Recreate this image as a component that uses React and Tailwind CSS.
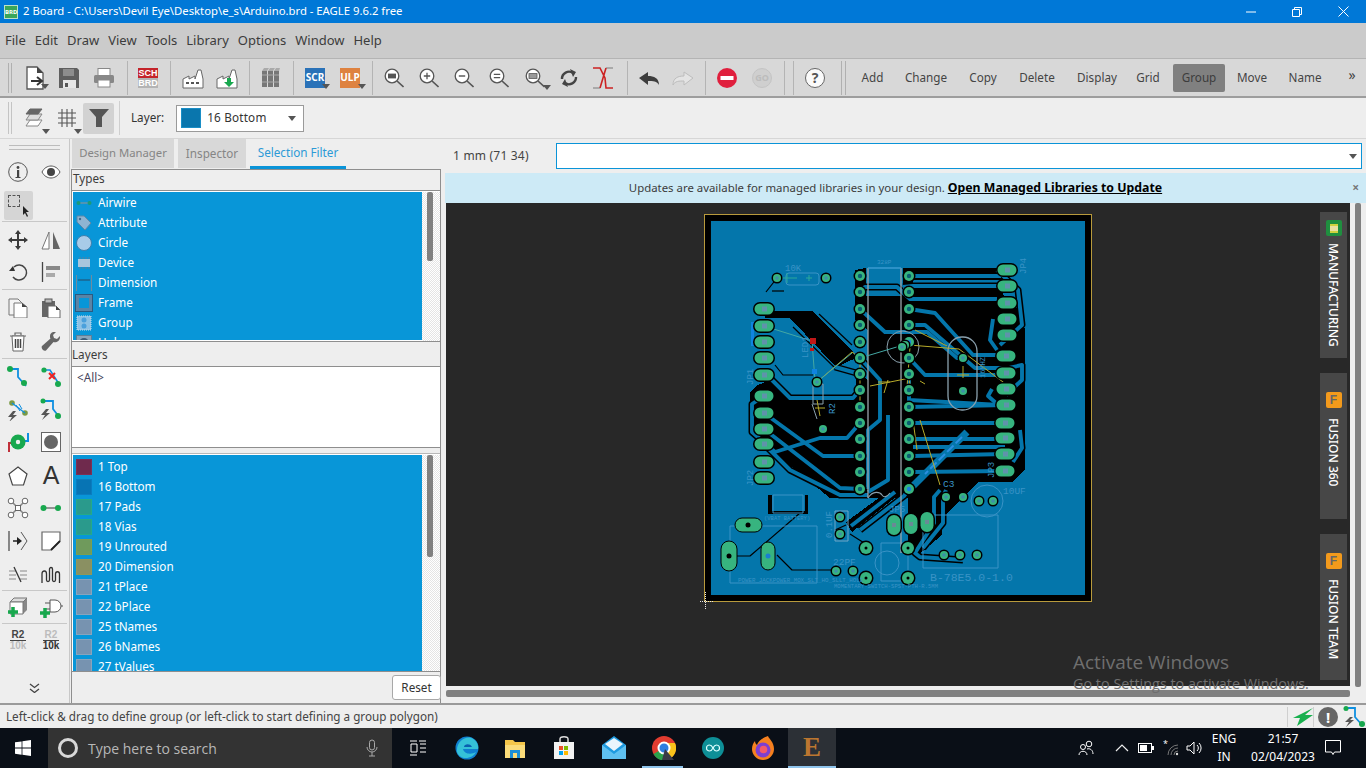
import React from "react";

const Svg = ({ w = 24, h = 24, vb, children, className = "" }) => (
  <svg width={w} height={h} viewBox={vb || `0 0 ${w} ${h}`} fill="none" className={className}>{children}</svg>
);
const Caret = ({ c = "" }) => <span className={`absolute w-0 h-0 border-l-[4px] border-r-[4px] border-t-[5px] border-l-transparent border-r-transparent border-t-[#555] ${c}`} />;
const Cell = ({ className = "", children }) => <div className={`relative h-full flex items-center justify-center shrink-0 ${className}`}>{children}</div>;
const Sep = ({ className = "" }) => <div className={`h-[34px] w-px bg-[#b4b4b4] ${className}`} />;

const Mag = ({ children }) => (
  <Svg w={20} h={20}>
    <circle cx="8" cy="8" r="6.8" stroke="#555" strokeWidth="1.3" fill="#fff" />
    <path d="M13 13l6.500 6" stroke="#555" strokeWidth="1.600" />
    <g transform="translate(8 8) scale(.8) translate(-10 -10)">{children}</g>
  </Svg>
);

const IconNew = () => <Svg><path d="M4 1h10l6 6v16H4z" fill="#fff" stroke="#555" strokeWidth="1.3" /><path d="M14 1v6h6z" fill="#444" /><path d="M8 15h10M14 11l5 4-5 4" stroke="#333" strokeWidth="2" fill="none" /></Svg>;
const IconSave = () => <Svg w={22} h={22}><path d="M1 1h18l2 2v18H1z" fill="#5f5f5f" /><rect x="5" y="2" width="11" height="7" fill="#8d8d8d" /><rect x="5" y="13" width="13" height="8" fill="#e6e6e6" /><rect x="7" y="16" width="3" height="4" fill="#555" /></Svg>;
const IconPrint = () => <Svg w={22} h={22}><rect x="5" y="1.500" width="12" height="7" fill="#fff" stroke="#888" /><rect x="1" y="8" width="20" height="8" rx="1.500" fill="#888" /><rect x="5" y="13" width="12" height="7" fill="#fff" stroke="#888" /></Svg>;
const IconSch = () => (
  <div className="w-[20px] h-[20px] flex flex-col font-['Liberation_Sans',sans-serif] font-bold text-[9px] leading-[10px] text-center">
    <div className="bg-[#c4242a] text-white">SCH</div>
    <div className="bg-[#b4b4b4] text-white">BRD</div>
  </div>
);
const Factory = ({ green }) => (
  <Svg w={22} h={22}>
    <path d="M1 21V12l6-3v3l6-3v3l3-9h3l2 9v9z" fill="#fff" stroke="#666" />
    {green ? <path d="M11 11v4H8l5 5 5-5h-3v-4z" fill="#18a84e" /> : <path d="M4 16h3M9 16h3M14 16h3" stroke="#555" strokeWidth="2" />}
  </Svg>
);
const Books = () => <Svg w={20} h={22}><path d="M1 4h5v16H1zM7 4h5v16H7zM13 4h5v16h-5z" fill="#777" /><path d="M1 4l2-3h5l-2 3zM7 4l2-3h5l-2 3zM13 4l2-3h4l-1 3z" fill="#aaa" /><path d="M1 8h17M1 15h17" stroke="#aaa" /></Svg>;
const Badge = ({ c, t }) => <div className={`w-[20px] h-[20px] ${c} text-white text-[10px] font-bold flex items-center justify-center font-['Noto_Sans',sans-serif]`}>{t}</div>;

const Tools = () => (
  <div className="h-[40px] bg-[#d8d8d8] border-t border-[#b4b4b4] border-b-2 border-b-[#9d9d9d] flex items-center shrink-0 text-[11.7px] text-[#3c3c3c]">
    <div className="ml-[8px] w-[4px] h-[30px] border-l border-r border-[#b0b0b0] shrink-0" />
    <div className="flex items-center h-full ml-[6px]">
      <Cell className="w-[34px]"><IconNew /><Caret c="right-[3px] bottom-[7px]" /></Cell>
      <Cell className="w-[34px]"><IconSave /></Cell>
      <Cell className="w-[36px]"><IconPrint /></Cell>
      <Cell className="w-[10px]"><Sep /></Cell>
      <Cell className="w-[32px]"><IconSch /></Cell>
      <Cell className="w-[12px]"><Sep /></Cell>
      <Cell className="w-[33px]"><Factory /></Cell>
      <Cell className="w-[36px]"><Factory green /></Cell>
      <Cell className="w-[8px]"><Sep /></Cell>
      <Cell className="w-[36px]"><Books /></Cell>
      <Cell className="w-[8px]"><Sep /></Cell>
      <Cell className="w-[36px]"><Badge c="bg-[#2a72b8]" t="SCR" /><Caret c="right-[3px] bottom-[7px]" /></Cell>
      <Cell className="w-[34px]"><Badge c="bg-[#de8240]" t="ULP" /><Caret c="right-[1px] bottom-[7px]" /></Cell>
      <Cell className="w-[10px]"><Sep /></Cell>
      <Cell className="w-[34px]"><Mag><rect x="5" y="7" width="10" height="6" fill="#555" /></Mag></Cell>
      <Cell className="w-[36px]"><Mag><path d="M6 10h8M10 6v8" stroke="#555" strokeWidth="1.6" /></Mag></Cell>
      <Cell className="w-[34px]"><Mag><path d="M6 10h8" stroke="#555" strokeWidth="1.8" /></Mag></Cell>
      <Cell className="w-[36px]"><Mag><path d="M6 8h8M6 12h8" stroke="#555" strokeWidth="1.6" /></Mag></Cell>
      <Cell className="w-[36px]"><Mag><rect x="5" y="7" width="10" height="6" stroke="#555" fill="#999" /></Mag><Caret c="right-[2px] bottom-[6px]" /></Cell>
      <Cell className="w-[32px]"><Svg w={20} h={20}><path d="M3 11a7 7 0 0 1 11-6M17 9a7 7 0 0 1-11 6" stroke="#444" strokeWidth="2.4" /><path d="M11 1l6 3-3 5zM9 19l-6-3 3-5z" fill="#444" /></Svg></Cell>
      <Cell className="w-[36px]"><Svg w={22} h={22}><path d="M1 21h7M14 1h7" stroke="#999" strokeWidth="1.6" /><path d="M1 1h7l5 10 1 10h7M14 1l-3 10-3 10" stroke="#cc2222" strokeWidth="1.6" /></Svg></Cell>
      <Cell className="w-[12px]"><Sep /></Cell>
      <Cell className="w-[32px]"><Svg w={22} h={16}><path d="M1 8l9-6v4c6 0 11 2 11 9-2-4-6-4-11-4v4z" fill="#3d3d3d" /></Svg></Cell>
      <Cell className="w-[36px]"><Svg w={22} h={16}><path d="M21 8l-9-6v4C6 6 1 8 1 15c2-4 6-4 11-4v4z" fill="#e4e4e4" stroke="#bdbdbd" /></Svg></Cell>
      <Cell className="w-[8px]"><Sep /></Cell>
      <Cell className="w-[36px]"><Svg w={20} h={20}><circle cx="10" cy="10" r="10" fill="#e01f3d" /><rect x="3.5" y="8" width="13" height="4" fill="#fff" /></Svg></Cell>
      <Cell className="w-[34px]"><div className="w-[20px] h-[20px] rounded-full bg-[#cfcfcf] border border-[#c4c4c4] text-[#bcbcbc] text-[9px] font-bold flex items-center justify-center">GO</div></Cell>
      <Cell className="w-[10px]"><Sep /></Cell>
      <Cell className="w-[9px]"><Sep /></Cell>
      <Cell className="w-[34px]"><div className="w-[20px] h-[20px] rounded-full border border-[#666] bg-[#fafafa] text-[#555] text-[14px] font-bold flex items-center justify-center">?</div></Cell>
      <div className="w-[5px] h-[34px] border-l border-r border-[#b0b0b0] ml-[9px] shrink-0" />
    </div>
    <div className="flex items-center h-full text-[#444]">
      <Cell className="w-[53px]">Add</Cell>
      <Cell className="w-[54px]">Change</Cell>
      <Cell className="w-[60px]">Copy</Cell>
      <Cell className="w-[48px]">Delete</Cell>
      <Cell className="w-[72px]">Display</Cell>
      <Cell className="w-[30px]">Grid</Cell>
      <div className="ml-[10px] w-[52px] h-[28px] rounded-[2px] bg-[#808080] text-[#3c3c3c] flex items-center justify-center">Group</div>
      <Cell className="w-[54px]">Move</Cell>
      <Cell className="w-[52px]">Name</Cell>
      <Cell className="w-[42px] pb-[6px] text-[14px]">»</Cell>
    </div>
  </div>
);

const Toolbar2 = () => (
  <div className="h-[41px] bg-[#eeeeee] border-b border-[#d6d6d6] flex items-center shrink-0 text-[11.7px] text-[#333]">
    <div className="ml-[8px] w-[4px] h-[32px] border-l border-r border-[#c4c4c4] shrink-0" />
    <Cell className="w-[38px] ml-[2px]">
      <Svg w={24} h={24}><path d="M7 14l4-6h12l-4 6z" fill="#fff" stroke="#888" transform="translate(-2 6)" /><path d="M7 10l4-6h12l-4 6z" fill="#ddd" stroke="#888" transform="translate(-2 4)" /><path d="M7 6l4-5h12l-4 5z" fill="#666" stroke="#666" transform="translate(-2 2)" /></Svg>
      <Caret c="right-[2px] bottom-[4px]" />
    </Cell>
    <Cell className="w-[30px]">
      <Svg w={20} h={20}><path d="M5 1v18M10 1v18M15 1v18M1 5h18M1 10h18M1 15h18" stroke="#555" strokeWidth="1.1" /></Svg>
      <Caret c="right-[0px] bottom-[4px]" />
    </Cell>
    <div className="w-[31px] h-[31px] ml-[1px] bg-[#d2d2d2] rounded-[2px] flex items-center justify-center shrink-0">
      <Svg w={20} h={18}><path d="M0 0h20l-7 8v10H7V8z" fill="#555" /></Svg>
    </div>
    <div className="w-px h-[34px] bg-[#cfcfcf] ml-[5px]" />
    <span className="ml-[11px]">Layer:</span>
    <div className="ml-[12px] w-[128px] h-[27px] bg-white border border-[#9a9a9a] flex items-center pl-[4px] relative">
      <span className="w-[20px] h-[20px] bg-[#0a76ad] border border-[#1a8ec6]" />
      <span className="ml-[6px] tracking-[0.2px]">16 Bottom</span>
      <Caret c="right-[7px] top-[10px]" />
    </div>
  </div>
);

const Tool = ({ children }) => (
  <div className="w-[32px] h-[29px] flex items-center justify-center relative">{children}</div>
);
const Row2 = ({ a, b, className = "" }) => (
  <div className={`flex gap-[1px] pl-[2px] ${className}`}><Tool>{a}</Tool><Tool>{b}</Tool></div>
);
const Hr = ({ className = "" }) => <div className={`mx-[2px] h-px bg-[#c8c8c8] ${className}`} />;
const Gn = "#18a84e";
const Bl = "#0f8fe0";

const LeftTools = () => (
  <div className="w-[70px] shrink-0 bg-[#eeeeee] border-r border-[#c8c8c8] flex flex-col">
    <div className="mt-[6px] mx-[9px] h-[5px] border-t border-b border-[#bdbdbd]" />
    <Row2 className="mt-[7px]"
      a={<Svg w={20} h={20}><circle cx="10" cy="10" r="9.3" stroke="#555" /><rect x="9" y="8" width="2.2" height="7.5" fill="#444" /><circle cx="10" cy="5.5" r="1.4" fill="#444" /><path d="M7.5 15.5h5" stroke="#444" /></Svg>}
      b={<Svg w={20} h={14}><path d="M1 7c4-8 14-8 18 0-4 8-14 8-18 0z" stroke="#555" fill="#fff" /><circle cx="10" cy="7" r="4" fill="#444" /></Svg>} />
    <div className="ml-[4px] mt-[5px] w-[29px] h-[29px] bg-[#d5d5d5] rounded-[2px] flex items-start justify-start p-[4px] relative">
      <div className="w-[12px] h-[12px] border border-dashed border-[#555]" />
      <Svg w={8} h={12} className="absolute right-[3px] bottom-[3px]"><path d="M1 1v9l2-2 2 4 1-1-2-4h3z" fill="#222" /></Svg>
    </div>
    <Hr className="mt-[1px]" />
    <Row2 className="mt-[3px]"
      a={<Svg w={20} h={20}><path d="M10 0l3 4h-2v5h5V7l4 3-4 3v-2h-5v5h2l-3 4-3-4h2v-5H4v2l-4-3 4-3v2h5V4H7z" fill="#3a3a3a" /></Svg>}
      b={<Svg w={20} h={20}><path d="M8 2v17H1z" fill="#fff" stroke="#777" /><path d="M12 2v17h7z" fill="#666" /></Svg>} />
    <Row2 className="mt-[3px]"
      a={<Svg w={20} h={20}><path d="M5 5a7.500 7.500 0 1 1-1 10" stroke="#444" strokeWidth="1.500" transform="translate(1 0)" /><path d="M1 9l6 0-2-5z" fill="#333" /></Svg>}
      b={<Svg w={20} h={20}><path d="M1.500 0v20" stroke="#444" strokeWidth="1.300" /><rect x="5" y="4" width="14" height="4" fill="#888" /><rect x="5" y="11" width="9" height="4" fill="#aaa" /></Svg>} />
    <Hr className="mt-[3px]" />
    <Row2 className="mt-[3px]"
      a={<Svg w={20} h={20}><path d="M1 1h9l4 4v12H1z" fill="#f5f5f5" stroke="#777" /><path d="M6 5h8l5 4v11H6z" fill="#fff" stroke="#777" /><path d="M14 5v4h5z" fill="#444" /></Svg>}
      b={<Svg w={20} h={20}><rect x="1" y="3" width="13" height="16" fill="#666" /><rect x="4" y="1" width="7" height="4" fill="#bbb" stroke="#555" /><path d="M7 8h8l4 4v8H7z" fill="#fff" stroke="#666" /><path d="M15 8v4h4z" fill="#444" /></Svg>} />
    <Row2 className="mt-[5px]"
      a={<Svg w={18} h={20}><path d="M1 4h16M6 3V1h6v2" stroke="#666" strokeWidth="1.200" /><path d="M3 4l1 15h10l1-15z" fill="#fff" stroke="#666" /><path d="M6.500 7v9M9 7v9M11.500 7v9" stroke="#444" strokeWidth="1.500" /></Svg>}
      b={<Svg w={20} h={20}><path d="M19 4l-3 3-3-1-1-3 3-3c-3-.8-6 1-6 4 0 1 0 2 .5 2.500L1 14c-1.500 2 2 6 4 4.500L12.500 10c2 .8 7 0 6.500-6z" fill="#666" /></Svg>} />
    <Hr className="mt-[2px]" />
    <Row2 className="mt-[3px]"
      a={<Svg w={24} h={24}><path d="M4 4h8v8l8 9" stroke={Bl} strokeWidth="1.800" /><circle cx="4" cy="4" r="3" fill={Gn} /><circle cx="18" cy="18" r="3" fill={Gn} /></Svg>}
      b={<Svg w={22} h={22}><path d="M4 4h6l9 14" stroke={Bl} strokeWidth="1.600" /><circle cx="4" cy="4" r="2.600" fill={Gn} /><circle cx="18" cy="18" r="3" fill={Gn} /><path d="M9 7l6 6M15 7l-6 6" stroke="#e22" strokeWidth="2" /></Svg>} />
    <Row2 className="mt-[4px]"
      a={<Svg w={24} h={22}><circle cx="6" cy="4" r="2.800" fill="#7a9a45" /><circle cx="19" cy="14" r="2.800" fill="#7a9a45" /><path d="M6 4l13 10" stroke={Bl} strokeWidth="1.300" /><path d="M10 6l4 6M13 5l3 5" stroke={Bl} /><path d="M7 12L2 18h4l-3 5 8-7H7l3-4z" fill="#555" /></Svg>}
      b={<Svg w={24} h={24}><path d="M4 3h10v8l7 9" stroke={Bl} strokeWidth="1.800" /><circle cx="4" cy="3" r="2.500" fill={Gn} /><circle cx="19" cy="18" r="3" fill={Gn} /><path d="M7 11L2 17h4l-3 5 8-7H7l3-4z" fill="#555" /></Svg>} />
    <Row2 className="mt-[3px]"
      a={<Svg w={22} h={22}><path d="M2 21v-9h5" stroke="#c0303a" strokeWidth="2" /><path d="M16 10h5V2" stroke={Bl} strokeWidth="2" /><circle cx="11" cy="11" r="7.500" fill={Gn} /><circle cx="11" cy="11" r="2.200" fill="#eee" /></Svg>}
      b={<Svg w={20} h={20}><rect x="0.500" y="0.500" width="19" height="19" fill="#fff" stroke="#666" /><circle cx="10" cy="10" r="7" fill="#666" /></Svg>} />
    <Row2 className="mt-[5px]"
      a={<Svg w={20} h={20}><path d="M10 1l9 7-3.500 11h-11L1 8z" fill="#fff" stroke="#444" strokeWidth="1.200" /></Svg>}
      b={<span className="font-['Liberation_Sans',sans-serif] text-[25px] leading-none text-[#333]">A</span>} />
    <Row2 className="mt-[3px]"
      a={<Svg w={22} h={22}><path d="M4 4l14 14M18 4L4 18" stroke="#888" strokeWidth="1.500" />{[[4, 4], [18, 4], [4, 18], [18, 18]].map(([x, y]) => <circle key={x + "" + y} cx={x} cy={y} r="2.800" fill="#fff" stroke="#666" />)}<rect x="8.500" y="8.500" width="5" height="5" fill="#fff" stroke="#666" /></Svg>}
      b={<Svg w={22} h={10}><path d="M4 5h14" stroke="#888" strokeWidth="1.800" /><circle cx="3.500" cy="5" r="3" fill={Gn} /><circle cx="18" cy="5" r="3" fill={Gn} /></Svg>} />
    <Row2 className="mt-[4px]"
      a={<Svg w={20} h={20}><path d="M1 0v20" stroke="#444" strokeWidth="1.200" /><path d="M5 10h6" stroke="#222" strokeWidth="1.500" /><path d="M9 6l5 4-5 4z" fill="#222" /><path d="M13 1l6 9-6 9" stroke="#555" /></Svg>}
      b={<Svg w={20} h={20}><path d="M1 1h18v9l-9 9H1z" fill="#fff" stroke="#666" strokeWidth="1.200" /><path d="M10 19l9-9" stroke="#222" strokeWidth="1.800" /></Svg>} />
    <Row2 className="mt-[5px]"
      a={<Svg w={20} h={20}><path d="M1 6h7M1 10h7M1 14h7M12 6h7M12 10h7M12 14h7" stroke="#aaa" strokeWidth="1.500" /><path d="M6 2l7 15" stroke="#333" strokeWidth="1.300" /></Svg>}
      b={<Svg w={20} h={18}><path d="M1 17V8c0-3 2-3 2.500-3s2 0 2 3v6c0 2 3 2 3 0V3c0-2 3-2 3 0v11c0 2 3 2 3 0V8c0-3 4-3 4 0v9" stroke="#333" strokeWidth="1.300" /></Svg>} />
    <Hr className="mt-[1px]" />
    <Row2 className="mt-[2px]"
      a={<Svg w={22} h={22}><path d="M3 5l4-4h13v12l-4 4H3z" fill="#888" /><path d="M7 1h13l-4 4H3z" fill="#ddd" stroke="#777" /><path d="M3 5h13v12H3z" fill="#fff" stroke="#777" /><path d="M4 10v10M-1 15h10" stroke={Gn} strokeWidth="3.500" transform="translate(2 0)" /></Svg>}
      b={<Svg w={24} h={22}><path d="M11 3h5a6 6 0 0 1 0 12h-5z" fill="#fff" stroke="#555" /><path d="M22 9h2M6 6h5M6 12h5" stroke="#555" /><path d="M6 11v10M1 16h10" stroke={Gn} strokeWidth="3.500" /></Svg>}
    />
    <Hr className="mt-[1px]" />
    <Row2 className="mt-[2px]"
      a={<div className="font-['Liberation_Sans',sans-serif] font-bold text-[10px] leading-[10px] text-center"><div className="text-[#444] border-b border-[#444]">R2</div><div className="text-[#bcbcbc]">10k</div></div>}
      b={<div className="relative font-['Liberation_Sans',sans-serif] font-bold text-[10px] leading-[10px] text-center"><div className="text-[#bcbcbc] border-b border-[#444]">R2</div><div className="text-[#333]">10k</div></div>} />
    <div className="mt-[28px] pl-[29px]"><Svg w={11} h={10}><path d="M1 1l4.500 3.500L10 1M1 6l4.500 3.500L10 6" stroke="#444" strokeWidth="1.300" /></Svg></div>
  </div>
);

const TypeIcon = ({ i }) => {
  const ic = [
    <Svg w={16} h={16}><path d="M3 8h10" stroke="#6a93a8" strokeWidth="1.500" /><circle cx="2.500" cy="8" r="2" fill="#1a9a78" /><circle cx="13.500" cy="8" r="2" fill="#1a9a78" /></Svg>,
    <Svg w={16} h={16}><path d="M1 1h7l7 7-6 7-8-8z" fill="#8fb4d2" stroke="#5d88a8" /><circle cx="4" cy="4" r="1.200" fill="#3d6a90" /></Svg>,
    <Svg w={16} h={16}><circle cx="8" cy="8" r="7.500" fill="#a8cbe8" stroke="#3b7fae" /></Svg>,
    <Svg w={16} h={16}><rect x="2" y="4" width="12" height="8" fill="#a8c6dd" /><path d="M4 2v12M7 2v12M10 2v12M13 2v12" stroke="#5d7f98" strokeDasharray="2 8" /></Svg>,
    <Svg w={16} h={16}><path d="M.5 0v16M15.500 0v16" stroke="#6d8ba0" /><path d="M2 5h12" stroke="#264a68" /></Svg>,
    <div className="w-[16px] h-[16px] bg-[#0896d8] border-[3px] border-[#5a84a6] outline outline-1 outline-[#2a5a80]" />,
    <Svg w={16} h={16}><rect x="1" y="1" width="14" height="14" fill="#8cc2e6" stroke="#c8dbe8" strokeDasharray="1 1" /><circle cx="8" cy="5" r="2.500" fill="#4aa0dc" /><circle cx="8" cy="11" r="2.500" fill="#4aa0dc" /></Svg>,
    <Svg w={16} h={16}><rect x="0.500" y="0.500" width="15" height="15" fill="#8aa5ba" stroke="#5d7f98" /><circle cx="8" cy="8" r="5" fill="#3c5d78" /></Svg>,
  ];
  return <span className="w-[16px] h-[16px] flex items-center justify-center shrink-0">{ic[i]}</span>;
};

const Scroll = ({ thumb }) => (
  <div className="w-[18px] shrink-0 bg-[repeating-conic-gradient(#e4e4e4_0_25%,#ffffff_0_50%)] bg-[length:2px_2px] pl-[5px]">
    <div className={`w-[6px] rounded-[2px] bg-[#808080] ${thumb}`} />
  </div>
);

const TYPES = ["Airwire", "Attribute", "Circle", "Device", "Dimension", "Frame", "Group", "Hole"];
const LAYERS = [
  ["1 Top", "bg-[#6f2a4d] border-[#7e2f55]"],
  ["16 Bottom", "bg-[#0774b4] border-[#0a7cc0]"],
  ["17 Pads", "bg-[#2a9a8c] border-[#24aa88]"],
  ["18 Vias", "bg-[#2a9a8c] border-[#24aa88]"],
  ["19 Unrouted", "bg-[#6f9a5c] border-[#7a9f50]"],
  ["20 Dimension", "bg-[#8a9062] border-[#8f9858]"],
  ["21 tPlace", "bg-[#7793b0] border-[#88a4bc]"],
  ["22 bPlace", "bg-[#7793b0] border-[#88a4bc]"],
  ["25 tNames", "bg-[#7793b0] border-[#88a4bc]"],
  ["26 bNames", "bg-[#7793b0] border-[#88a4bc]"],
  ["27 tValues", "bg-[#7793b0] border-[#88a4bc]"],
];

const Panel = () => (
  <div className="w-[373px] shrink-0 bg-[#eeeeee] flex flex-col text-[11.7px]">
    <div className="h-[30px] flex items-start pl-[2px] gap-[4px] text-[#858585] shrink-0">
      <div className="w-[102px] h-[29px] bg-[#d8d8d8] flex items-center justify-center text-[11.3px]">Design Manager</div>
      <div className="w-[68px] h-[29px] bg-[#d8d8d8] flex items-center justify-center">Inspector</div>
      <div className="w-[96px] h-[30px] flex items-center justify-center text-[#2c9ad6] border-b-[3px] border-[#0a94d8]">Selection Filter</div>
    </div>
    <div className="ml-[1px] mr-[2px] flex-1 flex flex-col border border-[#8e8e8e] border-b-0">
      <div className="h-[21px] border-b border-[#8e8e8e] pl-[1px] text-[#3c3c3c] leading-[16px] shrink-0">Types</div>
      <div className="h-[151px] bg-white border-b border-[#8e8e8e] flex pl-[1px] pt-[1px] shrink-0 overflow-hidden">
        <div className="w-[350px] h-[148px] bg-[#0896d8] overflow-hidden text-white pt-[1px]">
          {TYPES.map((t, i) => (
            <div key={t} className="h-[20px] flex items-center pl-[3px]"><TypeIcon i={i} /><span className="ml-[6px]">{t}</span></div>
          ))}
        </div>
        <Scroll thumb="h-[69px]" />
      </div>
      <div className="h-[25px] border-b border-[#8e8e8e] text-[#3c3c3c] leading-[24px] shrink-0">Layers</div>
      <div className="h-[81px] bg-white border-b border-[#8e8e8e] pl-[5px] pt-[2px] text-[#44445c] shrink-0">&lt;All&gt;</div>
      <div className="h-[6px] border-b border-[#b8b8b8] shrink-0" />
      <div className="h-[218px] bg-white border-b border-[#8e8e8e] flex pl-[1px] pt-[1px] shrink-0 overflow-hidden">
        <div className="w-[350px] h-[216px] bg-[#0896d8] overflow-hidden text-white pt-[2px]">
          {LAYERS.map(([t, c]) => (
            <div key={t} className="h-[20px] flex items-center pl-[3px]">
              <span className={`w-[16px] h-[16px] border shrink-0 ${c}`} /><span className="ml-[6px]">{t}</span>
            </div>
          ))}
        </div>
        <Scroll thumb="h-[102px]" />
      </div>
      <div className="flex-1 flex justify-end items-start pt-[3px]">
        <div className="w-[49px] h-[25px] -mr-[1px] bg-white border border-[#a8a8a8] rounded-[3px] flex items-center justify-center text-[#333]">Reset</div>
      </div>
    </div>
  </div>
);

const ICY = [276, 292, 309, 325, 342, 358, 374, 390, 407, 423, 439, 456, 472, 489];
const HDR = [[764, 309], [764, 326], [764, 342], [764, 358], [764, 375], [764, 396], [764, 413], [764, 429], [764, 444], [764, 462], [764, 478],
  [1007, 270], [1007, 286], [1007, 303], [1007, 319], [1007, 335], [1006, 356], [1006, 373], [1006, 389], [1006, 405], [1005, 423], [1005, 438], [1005, 454], [1005, 471]];
const BLACK = [
  "765,311 812,311 852,350 856,358 836,367 790,318 765,318",
  "750,392 758,385 770,380 790,397 856,397 856,372 868,380 868,498 830,498 775,453 750,433",
  "855,270 866,268 1003,268 1003,295 1020,312 1025,330 1025,470 1012,482 978,482 942,518 942,535 917,556 908,552 908,498 868,498 868,330 855,320",
  "846,522 895,486 902,492 852,532",
  "768,495 772,495 772,511 805,511 805,495 808,495 808,514 768,514",
];
const BLUEAREA = [
  "866,268 903,268 903,296 890,296 866,296",
  "913,280 1000,280 1000,283 913,283",
  "1003,268 1025,268 1025,298 1003,295",
];
const TR = [
  "909,276 1001,276",
  "860,292 865,287 897,287 910,299 997,299",
  "903,287 913,286 1000,286",
  "860,309 885,332 927,332 957,358 963,358",
  "909,309 935,313 973,355 1000,355",
  "909,325 925,325 975,368 1006,368",
  "860,358 880,380 880,420 868,430 868,489",
  "860,374 835,367",
  "860,390 853,398 790,398 765,373",
  "909,358 925,375 1000,375",
  "909,376 909,400 1000,405",
  "909,407 1006,405",
  "913,423 1005,423",
  "913,439 1005,439",
  "913,447 1005,447",
  "913,456 1005,454",
  "913,472 1005,471",
  "764,396 752,404 752,432 775,452 820,438 847,438 860,423",
  "764,413 823,456 860,456",
  "764,429 840,488 860,489",
  "764,444 790,470 840,495 868,495",
  "997,270 1018,290 1022,325 1000,345",
  "993,319 990,340 997,350",
  "1000,370 1022,365 1022,380 1006,395",
  "992,389 988,396 996,403",
  "1020,430 1022,448 1013,462",
  "851,526 895,492",
  "860,530 904,496 909,489",
  "888,415 888,480 868,492",
  "940,490 934,497 934,523 915,553 920,557 963,560",
  "946,490 943,497 943,523 923,548",
];
const BIG = ["967,432 913,486"];

const Board = () => (
  <svg width="400" height="400" viewBox="700 210 400 400" className="shrink-0 block" shapeRendering="crispEdges">
    <rect x="704.500" y="214.500" width="387" height="387" fill="#000" stroke="#b89a3c" />
    <rect x="711" y="221" width="374" height="374" fill="#0476ab" />
    <g fill="#000">{BLACK.map((p) => <polygon key={p} points={p} />)}</g>
    <g fill="#0476ab">{BLUEAREA.map((p) => <polygon key={p} points={p} />)}</g>
    <g shapeRendering="geometricPrecision" strokeLinejoin="round" fill="none">
      <g stroke="#000" strokeWidth="7">{TR.map((p) => <polyline key={p} points={p} />)}</g>
      <g stroke="#0476ab" strokeWidth="3.900">{TR.map((p) => <polyline key={p} points={p} />)}</g>
      <polyline points={BIG[0]} stroke="#0476ab" strokeWidth="7" />
      <polyline points="962,437 925,474" stroke="#2a8ee0" strokeWidth="2" strokeDasharray="9 3" />
      <g stroke="#000" strokeWidth="1.200">
        <polyline points="819,314 852,345" /><polyline points="793,327 835,368" />
        <polyline points="772,291 784,291" /><polyline points="777,278 766,292" />
        <polyline points="775,365 783,375 813,375" />
        <polyline points="737,556 750,556 800,513" /><polyline points="777,555 792,570 833,570" />
        <polyline points="846,525 835,530" /><polyline points="850,534 872,548" />
      </g>
      <g stroke="#3a93c6" strokeWidth="1">
        <rect x="786" y="273" width="33" height="12" rx="3" />
        <rect x="773" y="495" width="30" height="18" />
        <rect x="730" y="526" width="87" height="57" />
        <rect x="881" y="543" width="27" height="38" />
        <circle cx="887" cy="563" r="12" />
        <rect x="923" y="515" width="75" height="53" />
        <circle cx="987" cy="501" r="16" />
        <rect x="835" y="511" width="13" height="30" stroke="#6ea6c8" />
        <path d="M781 278h16M787 273v10M806 278h6M809 275v6" stroke="#2aa89a" />
      </g>
      <g stroke="#8aa0ad" strokeWidth="1.300">
        <path d="M868 268v230M901 268v285" stroke="#9aa5ab" />
        <path d="M868 268h33" stroke="#3a9bd0" strokeWidth="1.500" />
        <rect x="948" y="337" width="29" height="73" rx="14" />
        <circle cx="903" cy="347" r="16" strokeWidth="1" />
        <path d="M818 384h-5v20h10v-20z M812 404l5 15" strokeWidth="1" />
        <path d="M868 498c5-8 12-6 14-3s5 2 8-2" strokeWidth="1.100" />
      </g>
      <g stroke="#b8ab2a" strokeWidth="1">
        <path d="M817 382l35-30 8 6M860 358v50M870 386l40-8M909 345l50 4 48 36M915 330l32 16M925 384l-5-3M913 420l4 30M920 420l20 65M910 347l-3 40M909 373l1 14" />
        <path d="M888 380l-4 13M878 382h12M963 366v12M957 375h12M817 400l3 16M815 408h10" />
      </g>
      <g stroke="#44a8a4" strokeWidth="1">
        <path d="M764 326l48 15 3 40 2 1M817 382l35-29M860 358l40-12 8-1" />
      </g>
    </g>
    <rect x="810" y="338" width="6" height="6" fill="#c01818" />
    <rect x="810" y="348" width="4" height="3" fill="#c01818" />
    <rect x="812" y="369" width="5" height="5" fill="#1084e0" />
    <rect x="764" y="354" width="5" height="6" fill="#1084e0" />
    <rect x="751" y="322" width="3" height="24" fill="#1084e0" />
    <g shapeRendering="geometricPrecision">
      {[860, 909].flatMap((x) => ICY.map((y) => (
        <g key={x + "_" + y}>
          <circle cx={x} cy={y} r="6.500" fill="#000" />
          <circle cx={x} cy={y} r="5" fill="#37b47f" />
          <circle cx={x} cy={y} r="2.200" fill={x === 909 && (y === 342 || y === 489) ? "#1b7ee0" : "#0a5e72"} />
        </g>
      )))}
      {[[777, 278], [826, 278], [817, 382], [823, 429], [963, 358], [963, 391], [840, 517], [840, 534], [836, 571], [853, 571], [946, 497], [963, 497], [979, 501], [993, 501], [944, 555], [960, 555], [977, 555], [905, 345], [902, 347]].map(([x, y]) => (
        <g key={x + "p" + y}>
          <circle cx={x} cy={y} r="5.500" fill="#000" />
          <circle cx={x} cy={y} r="4" fill="#37b47f" />
          <circle cx={x} cy={y} r="1.800" fill="#3d8fa8" />
        </g>
      ))}
      {[[866, 548], [866, 578], [908, 548], [908, 578]].map(([x, y]) => (
        <g key={x + "s" + y}>
          <circle cx={x} cy={y} r="7.500" fill="#000" />
          <circle cx={x} cy={y} r="6" fill="#37b47f" />
          <circle cx={x} cy={y} r="1.500" fill="#000" />
        </g>
      ))}
      {HDR.map(([x, y]) => (
        <g key={x + "h" + y}>
          <rect x={x - 11} y={y - 7} width="22" height="14" rx="7" fill="#000" />
          <rect x={x - 9.500} y={y - 5.500} width="19" height="11" rx="5.500" fill="#37b47f" />
          <rect x={x - 2} y={y - 2.500} width="5" height="5" fill="#5f93ab" />
        </g>
      ))}
      {[[894, 525], [911, 524], [927, 522]].map(([x, y]) => (
        <g key={x + "j" + y}>
          <rect x={x - 8} y={y - 11.500} width="16" height="23" rx="8" fill="#000" />
          <rect x={x - 6.500} y={y - 10} width="13" height="20" rx="6.500" fill="#37b47f" />
          <rect x={x - 2} y={y - 2} width="4" height="4" fill="#6a8a96" />
        </g>
      ))}
      <rect x="735" y="518" width="27" height="14" rx="7" fill="#37b47f" stroke="#000" />
      <circle cx="748" cy="525" r="2.500" fill="#000" />
      <rect x="721" y="541" width="16" height="30" rx="8" fill="#37b47f" stroke="#000" />
      <circle cx="729" cy="556" r="2.500" fill="#000" />
      <rect x="761" y="542" width="14" height="28" rx="7" fill="#37b47f" stroke="#000" />
      <circle cx="768" cy="556" r="2.500" fill="#1a7ed0" />
    </g>
    <g fontFamily="'Liberation Mono',monospace" fill="#3a93c6" shapeRendering="geometricPrecision">
      <text x="785" y="271" fontSize="9">10K</text>
      <text x="877" y="264" fontSize="6">328P</text>
      <text transform="translate(1026 274) rotate(-90)" fontSize="9">JP4</text>
      <text transform="translate(753 385) rotate(-90)" fontSize="9">JP1</text>
      <text transform="translate(753 486) rotate(-90)" fontSize="9">JP2</text>
      <text transform="translate(994 478) rotate(-90)" fontSize="9">JP3</text>
      <text transform="translate(808 358) rotate(-90)" fontSize="9">LED1</text>
      <text transform="translate(835 414) rotate(-90)" fontSize="9">R2</text>
      <text transform="translate(985 378) rotate(-90)" fontSize="7">16MHZ</text>
      <text transform="translate(832 538) rotate(-90)" fontSize="9">0.1UF</text>
      <text x="833" y="565" fontSize="9.500">22PF</text>
      <text x="1003" y="494" fontSize="9.500">10UF</text>
      <text x="943" y="487" fontSize="9.500">C3</text>
      <text x="889" y="512" fontSize="9">JP5</text>
      <text x="930" y="581" fontSize="11.500">B-78E5.0-1.0</text>
      <text x="738" y="582" fontSize="5.800">POWER_JACKPOWER_MOX_SLT_HO_SLLT_HOLE</text>
      <text x="834" y="588" fontSize="5.600">MOMENTARY-SWITCH-SPST-PTH-R.5MM</text>
      <text x="764" y="520" fontSize="5.500">(VBAT BATTERY)</text>
    </g>
    <path d="M705 592v18M696 601h18" stroke="#e8e8e8" strokeDasharray="1 1" />
  </svg>
);

const SideTab = ({ icon, label, className = "", h = "h-[146px]" }) => (
  <div className={`w-[27px] ${h} bg-[#474747] flex flex-col items-center ${className}`}>
    {icon}
    <span className="[writing-mode:vertical-rl] text-white text-[12px] font-medium leading-[27px]">{label}</span>
  </div>
);
const FIcon = () => <div className="w-[16px] h-[16px] mb-[10px] bg-[#f39a1c] rounded-[2px] text-[#666] font-bold text-[12px] leading-[16px] text-center font-['Liberation_Sans',sans-serif]">F</div>;
const ChipIcon = () => <div className="w-[16px] h-[16px] mb-[7px] bg-[#1f8f3f] rounded-[2px] flex items-center justify-center"><div className="w-[8px] h-[9px] bg-[#e8e0a0] border-t-2 border-b-2 border-[#cfd23e]" /></div>;

const Right = () => (
  <div className="flex-1 ml-[2px] flex flex-col min-w-0">
    <div className="h-[34px] bg-[#eeeeee] flex items-center shrink-0 text-[12px] text-[#444] relative">
      <span className="ml-[8px] w-[103px] tracking-[0.2px]">1 mm (71 34)</span>
      <div className="w-[806px] h-[26px] bg-white border border-[#0a94d8] relative">
        <Caret c="right-[4px] top-[10px]" />
      </div>
    </div>
    <div className="h-[30px] bg-[#cdeaf6] flex items-center justify-center shrink-0 text-[#3c3c3c] relative pr-[20px]">
      <span className="text-[11.4px]">Updates are available for managed libraries in your design.&nbsp;</span>
      <span className="font-bold text-black underline text-[12.3px]">Open Managed Libraries to Update</span>
      <span className="absolute right-[7px] top-[6px] text-[#777] text-[12px] font-bold">×</span>
    </div>
    <div className="flex-1 flex min-h-0 bg-[#eeeeee] pl-px">
      <div className="w-[904px] flex flex-col">
        <div className="h-[483px] bg-[#282828] flex relative overflow-visible">
          <div className="ml-[254px] mt-[7px]"><Board /></div>
          <div className="ml-auto mr-[3px] mt-[9px] flex flex-col gap-[15px]">
            <SideTab className="pt-[8px]" h="h-[146px]" icon={<ChipIcon />} label="MANUFACTURING" />
            <SideTab className="pt-[19px]" icon={<FIcon />} label="FUSION 360" />
            <SideTab className="pt-[19px]" icon={<FIcon />} label="FUSION TEAM" />
          </div>
          <div className="absolute left-[627px] top-[448px] z-10 font-['Open_Sans',sans-serif] text-[#6f6f6f]">
            <div className="text-[19px] leading-[22px]">Activate Windows</div>
            <div className="text-[14.4px] leading-[22px] whitespace-nowrap">Go to Settings to activate Windows.</div>
          </div>
        </div>
        <div className="pt-[4px]"><div className="h-[7px] w-full rounded-[2px] bg-[#808080]" /></div>
      </div>
      <div className="pl-[5px]"><div className="w-[6px] h-[484px] bg-[#808080] rounded-[2px]" /></div>
    </div>
  </div>
);

const Status = () => (
  <div className="h-[25px] bg-[#eeeeee] border-t-2 border-[#9a9a9a] flex items-center shrink-0 text-[11.7px] text-[#444] pl-[6px] relative">
    <span>Left-click &amp; drag to define group (or left-click to start defining a group polygon)</span>
    <div className="ml-auto flex items-center h-full">
      <div className="w-px h-[20px] bg-[#cfcfcf]" />
      <div className="w-[25px] flex justify-center pl-[4px]"><Svg w={20} h={20}><path d="M20 1L8 7 0 11h7l-3 8 16-11h-8z" fill="#18b04e" /></Svg></div>
      <div className="w-px h-[20px] bg-[#cfcfcf]" />
      <div className="w-[28px] flex justify-center"><div className="w-[20px] h-[20px] rounded-full bg-[#666] text-white font-bold text-[15px] leading-[20px] text-center">!</div></div>
      <div className="w-[24px] flex justify-center"><Svg w={22} h={22}><path d="M3 2h9v9l7 8" stroke={Bl} strokeWidth="1.800" /><circle cx="3" cy="2.500" r="2.500" fill={Gn} /><circle cx="19" cy="18" r="3" fill={Gn} /><path d="M7 11L2 16h4l-3 5 8-7H7l3-3z" fill="#555" /></Svg></div>
    </div>
  </div>
);

const TB = ({ children, className = "" }) => <div className={`h-full flex items-center justify-center shrink-0 ${className}`}>{children}</div>;

const Taskbar = () => (
  <div className="h-[40px] bg-[#0a0f17] flex items-center shrink-0 text-white relative font-['Open_Sans',sans-serif]">
    <TB className="w-[48px] pr-[2px]">
      <Svg w={16} h={16}><path d="M0 2.300l6.600-.9v6.200H0zM7.400 1.300L16 0v7.600H7.400zM0 8.400h6.600v6.300L0 13.800zM7.400 8.400H16V16l-8.600-1.200z" fill="#fff" /></Svg>
    </TB>
    <div className="w-[344px] h-full bg-[#333333] flex items-center pl-[10px] shrink-0">
      <span className="w-[20px] h-[20px] rounded-full border-[3px] border-[#d8d8d8]" />
      <span className="ml-[10px] text-[14px] text-[#b8b8b8]">Type here to search</span>
      <Svg w={12} h={18} className="ml-auto mr-[14px]"><rect x="3.500" y="1" width="5" height="10" rx="2.500" stroke="#aaa" /><path d="M1 8a5 5 0 0 0 10 0M6 13v4M3 17h6" stroke="#aaa" /></Svg>
    </div>
    <TB className="w-[51px]"><Svg w={16} h={16}><path d="M0 1h7M9 1h7M1 4h6v8H1zM0 15h7" stroke="#fff" /><path d="M10 4h6M10 8h6M10 12h6" stroke="#fff" /></Svg></TB>
    <TB className="w-[47px]">
      <Svg w={24} h={24}><circle cx="12" cy="12" r="11.500" fill="#0f7fd0" /><path d="M2 16C1 6 10 0 16 2c5 1.500 8 7 7 11H8c1 5 8 6 13 3-3 7-16 9-19 0z" fill="#35c1d8" /><path d="M9 11c0-3 6-4 8 0z" fill="#0a5fb0" /></Svg>
    </TB>
    <TB className="w-[50px] relative">
      <Svg w={22} h={22}><path d="M1 3h8l2 2h10v16H1z" fill="#f5c64a" /><path d="M1 8h20v13H1z" fill="#fbdc7a" /><rect x="6" y="13" width="10" height="8" fill="#1d8fd8" /><rect x="9" y="16" width="4" height="5" fill="#fbdc7a" /></Svg>
    </TB>
    <TB className="w-[48px]">
      <Svg w={22} h={24}><path d="M7 6V3c0-3 8-3 8 0v3" stroke="#ddd" strokeWidth="1.500" /><rect x="1" y="6" width="20" height="17" fill="#f2f2f2" /><rect x="6" y="10" width="4" height="4" fill="#e8502a" /><rect x="11" y="10" width="4" height="4" fill="#7fba00" /><rect x="6" y="15" width="4" height="4" fill="#00a4ef" /><rect x="11" y="15" width="4" height="4" fill="#ffb900" /></Svg>
    </TB>
    <TB className="w-[51px]">
      <Svg w={24} h={24}><path d="M0 9l12-9 12 9v14H0z" fill="#1e9ae0" /><path d="M0 9l12 9 12-9v14H0z" fill="#5fc0f0" /><path d="M3 8l9-6 9 6-9 7z" fill="#e8f4fc" /></Svg>
    </TB>
    <TB className="w-[49px]">
      <Svg w={24} h={24}><circle cx="12" cy="12" r="12" fill="#e23c30" /><path d="M12 12L1.500 18A12 12 0 0 0 14 24z" fill="#2ba24c" /><path d="M12 7h11a12 12 0 0 1-9 17z" fill="#f9c21a" /><circle cx="12" cy="12" r="5.500" fill="#2f7fe0" stroke="#fff" strokeWidth="2" /><path d="M13 13l9 11H10z" fill="#3a3a48" /></Svg>
    </TB>
    <TB className="w-[50px]">
      <div className="w-[22px] h-[22px] rounded-full bg-[#0e8f97] flex items-center justify-center"><Svg w={14} h={8}><path d="M3.500 1a3 3 0 1 0 0 6c2 0 3-2 3.500-3s1.500-3 3.500-3a3 3 0 1 1 0 6c-2 0-3-2-3.500-3S5.500 1 3.500 1z" stroke="#dff" strokeWidth="1.200" /></Svg></div>
    </TB>
    <TB className="w-[50px]">
      <Svg w={24} h={26}><path d="M17 1c1 3 6 6 6 13a11 11 0 1 1-22 0c0-3 1-6 3-8 0 2 1 3 2 4 1-4 5-7 11-9z" fill="#f5801f" /><circle cx="12" cy="15" r="7.500" fill="#7d3fd0" /><circle cx="12.500" cy="14.500" r="3.800" fill="#f45a6a" /></Svg>
    </TB>
    <div className="w-[48px] h-full bg-[#2c3036] border-b-[2px] border-[#8fc4ec] flex items-center justify-center shrink-0 font-['Liberation_Serif',serif] font-bold text-[27px] text-[#bb7630]">E</div>
    <div className="absolute left-[642px] bottom-0 w-[41px] h-[2px] bg-[#8fc4ec]" />
    <div className="ml-auto flex items-center h-full">
      <TB className="w-[26px] mr-[11px]"><Svg w={16} h={16}><circle cx="5" cy="7" r="2.500" stroke="#fff" /><circle cx="11" cy="4" r="2.800" stroke="#fff" /><path d="M1 15c0-5 8-5 8 0M9 9c3-1 6 1 6 5" stroke="#fff" /></Svg></TB>
      <TB className="w-[24px]"><Svg w={14} h={8}><path d="M1 7l6-6 6 6" stroke="#eee" strokeWidth="1.200" /></Svg></TB>
      <TB className="w-[24px]"><Svg w={16} h={10}><rect x=".5" y=".5" width="13" height="9" stroke="#fff" /><rect x="2" y="2" width="7" height="6" fill="#fff" /><rect x="14" y="3" width="2" height="4" fill="#fff" /></Svg></TB>
      <TB className="w-[25px]"><Svg w={16} h={16}><text x="0" y="7" fill="#fff" fontSize="9">*</text><path d="M5 15a10 10 0 0 1 10-10M8 15a7 7 0 0 1 7-7M11 15a4 4 0 0 1 4-4" stroke="#777" /><circle cx="14" cy="14" r="1.200" fill="#ddd" /></Svg></TB>
      <TB className="w-[22px]"><Svg w={17} h={14}><path d="M1 5h3l4-4v12L4 9H1z" stroke="#fff" /><path d="M11 4a4 4 0 0 1 0 6M13 2a7 7 0 0 1 0 10" stroke="#fff" /></Svg></TB>
      <div className="w-[38px] text-center text-[12px] leading-[18px] font-['Noto_Sans',sans-serif]"><div>ENG</div><div>IN</div></div>
      <div className="w-[76px] ml-[2px] text-center text-[12px] leading-[18px] font-['Noto_Sans',sans-serif]"><div>21:57</div><div className="whitespace-nowrap">02/04/2023</div></div>
      <TB className="w-[45px] pr-[21px]"><Svg w={16} h={16}><path d="M.5.500h15v11.500H9.500L8 14.500 6.500 12H.5z" stroke="#fff" /></Svg></TB>
    </div>
  </div>
);

export default function App() {
  return (
    <div className="w-[1366px] h-[768px] overflow-hidden flex flex-col font-['Noto_Sans','Open_Sans',sans-serif] bg-[#eeeeee]">
      <div className="h-[23px] bg-[#0078d7] flex items-center text-white shrink-0 text-[11.3px] relative">
        <div className="ml-[4px] w-[14px] h-[14px] bg-[#3aa65a] border border-[#bde0c8] text-[6px] leading-[12px] text-center font-bold text-white">BRD</div>
        <span className="ml-[5px]">2 Board - C:\Users\Devil Eye\Desktop\e_s\Arduino.brd - EAGLE 9.6.2 free</span>
        <div className="ml-auto flex items-center h-full">
          <Cell className="w-[46px]"><Svg w={10} h={10}><path d="M0 5h10" stroke="#fff" /></Svg></Cell>
          <Cell className="w-[46px]"><Svg w={10} h={10}><path d="M.5 2.500h7v7h-7zM2.500 2.500v-2h7v7h-2" stroke="#fff" /></Svg></Cell>
          <Cell className="w-[46px]"><Svg w={11} h={11}><path d="M.5.500l10 10M10.500.500l-10 10" stroke="#fff" /></Svg></Cell>
        </div>
      </div>
      <div className="h-[35px] bg-[#cbcbcb] flex items-center shrink-0 text-[13px] text-[#3c3c3c] pl-[5px] gap-[9px]">
        {["File", "Edit", "Draw", "View", "Tools", "Library", "Options", "Window", "Help"].map((m) => <span key={m}>{m}</span>)}
      </div>
      <Tools />
      <Toolbar2 />
      <div className="flex-1 flex min-h-0">
        <LeftTools />
        <Panel />
        <Right />
      </div>
      <Status />
      <Taskbar />
    </div>
  );
}
